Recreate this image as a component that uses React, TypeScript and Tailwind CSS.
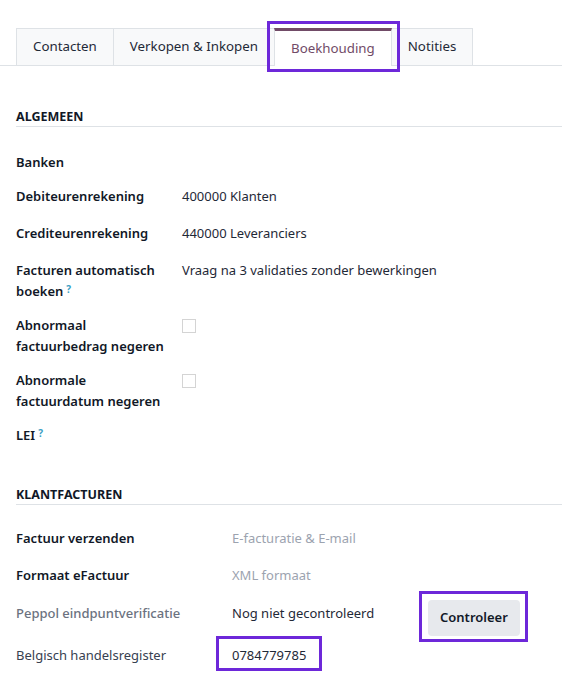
import React from "react";

const Q = () => <sup className="ml-[3px] text-[10px] font-bold text-[#3aa0c4] relative -top-[3px]">?</sup>;

function Row({ label, children, labelClass = "font-semibold text-[#111827]", valueClass = "min-h-[24px]", labelW = "w-[166px]" }: { label: React.ReactNode; children?: React.ReactNode; labelClass?: string; valueClass?: string; labelW?: string }) {
  return (
    <div className="flex mb-[13px]">
      <div className={`${labelW} shrink-0 leading-[21px] ${labelClass}`}>{label}</div>
      <div className={`flex-1 leading-[21px] ${valueClass}`}>{children}</div>
    </div>
  );
}

const Check = () => <div className="w-[14px] h-[14px] border border-[#d4d4d4] mt-[4px]" />;

export default function App() {
  const tab = "px-4 h-[37px] flex items-center border border-[#dee2e6] border-b-0 bg-[#f8f9fa] text-[#1f2937] text-[13.3px] -ml-px";
  return (
    <div className="w-[562px] h-[686px] bg-white overflow-hidden text-[13px] text-[#1f2937]" style={{ fontFamily: '"Noto Sans", sans-serif' }}>
      <div className="pt-[28px] border-b border-[#dee2e6] flex pl-4">
        <div className={tab + " ml-0"}>Contacten</div>
        <div className={tab}>Verkopen &amp; Inkopen</div>
        <div className="relative">
          <div className="px-4 h-[38px] -mb-px flex items-center border border-[#dee2e6] border-b-0 border-t-[3px] border-t-[#714b67] bg-white text-[#714b67] text-[13.3px] -ml-px">Boekhouding</div>
          <div className="absolute left-[-8px] right-[-8px] top-[-7px] bottom-[-7px] border-[3px] border-[#6d28d9]" />
        </div>
        <div className={tab}>Notities</div>
      </div>

      <div className="pl-4">
        <div className="mt-[42px] pb-[1px] border-b border-[#dee2e6] font-bold text-[12.5px] text-[#111827] leading-[17px]">ALGEMEEN</div>
        <div className="mt-[25px]">
          <Row label="Banken" valueClass="" />
          <Row label="Debiteurenrekening">400000 Klanten</Row>
          <Row label="Crediteurenrekening">440000 Leveranciers</Row>
          <Row label={<>Facturen automatisch<br />boeken<Q /></>}>Vraag na 3 validaties zonder bewerkingen</Row>
          <Row label={<>Abnormaal<br />factuurbedrag negeren</>}><Check /></Row>
          <Row label={<>Abnormale<br />factuurdatum negeren</>}><Check /></Row>
          <Row label={<>LEI<Q /></>} valueClass="" />
        </div>

        <div className="mt-[40px] pb-[1px] border-b border-[#dee2e6] font-bold text-[12.5px] text-[#111827] leading-[17px]">KLANTFACTUREN</div>
        <div className="mt-[23px]">
          <Row label="Factuur verzenden" labelW="w-[216px]"><span className="text-[#9ca3af]">E-facturatie &amp; E-mail</span></Row>
          <Row label="Formaat eFactuur" labelW="w-[216px]"><span className="text-[#9ca3af]">XML formaat</span></Row>
          <div className="flex">
            <div className="w-[216px] shrink-0 leading-[21px] text-[#6b7280] font-medium mt-[1px]">Peppol eindpuntverificatie</div>
            <div className="w-[196px] leading-[21px] mt-[1px]">Nog niet gecontroleerd</div>
            <div className="relative mt-[-2px]">
              <button className="h-[36px] px-[12px] rounded bg-[#e7e9ed] font-semibold text-[#111827]">Controleer</button>
              <div className="absolute left-[-9px] right-[-8px] top-[-9px] bottom-[-6px] border-[3px] border-[#6d28d9]" />
            </div>
          </div>
          <div className="flex mt-[9px]">
            <div className="w-[216px] shrink-0 leading-[21px] text-[#374151]">Belgisch handelsregister</div>
            <div className="relative leading-[21px]">
              0784779785
              <div className="absolute left-[-16px] right-[-16px] top-[-9px] bottom-[-5px] border-[3px] border-[#6d28d9]" />
            </div>
          </div>
        </div>
      </div>
    </div>
  );
}
